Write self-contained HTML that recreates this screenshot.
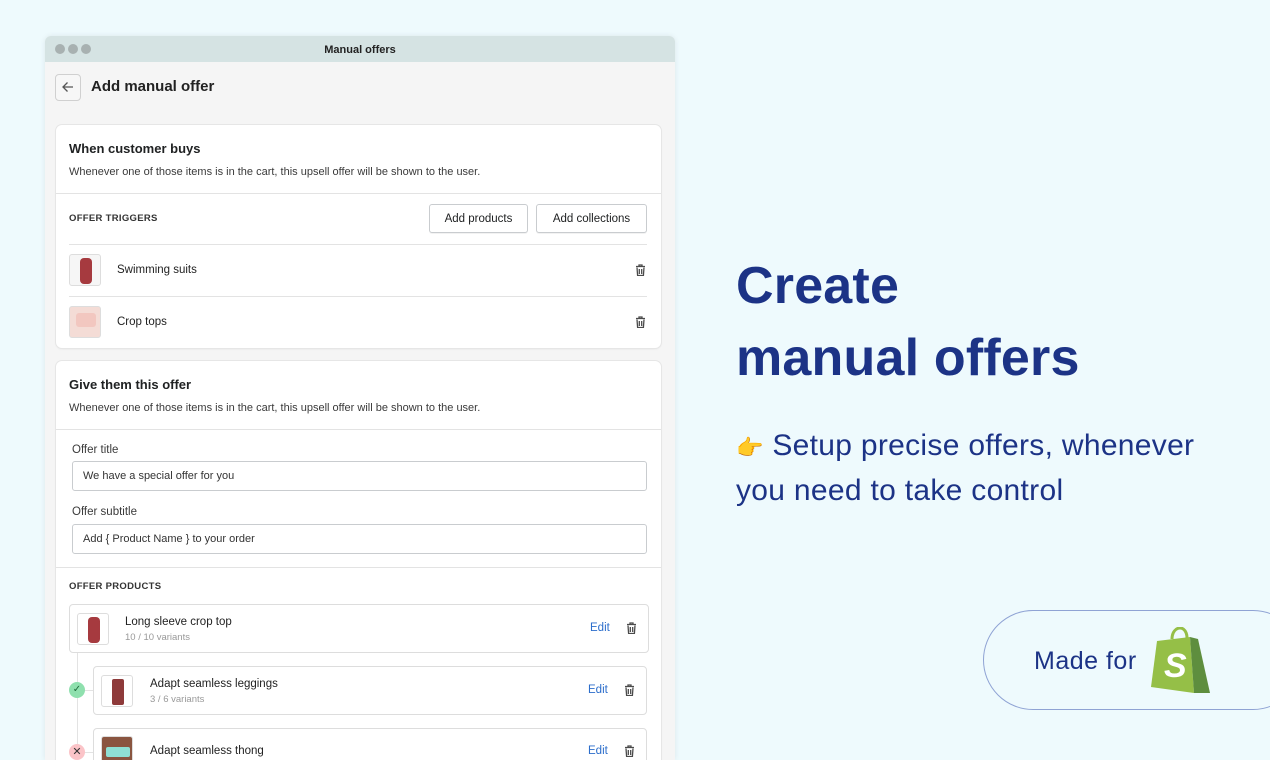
<!DOCTYPE html>
<html><head><meta charset="utf-8"><style>
*{margin:0;padding:0;box-sizing:border-box}
body{width:1270px;height:760px;overflow:hidden;background:#eefafd;font-family:"Liberation Sans",sans-serif;position:relative;color:#202223}
.a{position:absolute}
.win{left:45px;top:36px;width:630px;height:724px;background:#f5f5f5;border-radius:6px 6px 0 0;overflow:hidden;box-shadow:0 0 6px rgba(0,0,0,.08)}
.tb{left:0;top:0;width:630px;height:26px;background:#d5e3e3}
.dot{width:10px;height:10px;border-radius:50%;background:#a8b1b1;top:8px}
.card{background:#fff;border-radius:6px;box-shadow:0 0 0 1px #e6e6e6,0 1px 2px rgba(0,0,0,.08)}
.h{font-size:13px;font-weight:bold}
.p{font-size:11px;color:#3a3a3a}
.lbl{font-size:9.5px;font-weight:bold;letter-spacing:.3px;color:#333}
.btn{border:1px solid #c9cccf;border-radius:3px;background:#fff;font-size:11.5px;text-align:center;line-height:28px;box-shadow:0 1px 0 rgba(0,0,0,.05)}
.hr{height:1px;background:#e3e3e3}
.th{border:1px solid #ddd;border-radius:3px;background:#f6f6f6;overflow:hidden}
.inp{border:1px solid #c9cccf;border-radius:3px;height:30px;font-size:11px;line-height:28px;padding-left:10px;color:#333}
.edit{color:#2c6ecb;font-size:11.5px}
.trash{width:11px;height:12px}
</style></head><body>
<div class="a win">
 <div class="a tb"></div>
 <div class="a dot" style="left:10px"></div><div class="a dot" style="left:23px"></div><div class="a dot" style="left:36px"></div>
 <div class="a" style="left:0;width:630px;top:8px;text-align:center;font-size:11px;font-weight:bold;color:#222">Manual offers</div>
 <div class="a" style="left:10px;top:38px;width:26px;height:27px;border:1px solid #d0d0d0;border-radius:4px;background:#f7f7f7"></div>
 <svg class="a" style="left:16px;top:44px" width="14" height="14" viewBox="0 0 14 14"><path d="M12 7H2M6.5 2.5L2 7l4.5 4.5" stroke="#555" stroke-width="1.3" fill="none"/></svg>
 <div class="a" style="left:46px;top:42px;font-size:15px;font-weight:bold;color:#222">Add manual offer</div>

 <div class="a card" style="left:11px;top:89px;width:605px;height:223px">
  <div class="a h" style="left:13px;top:16px">When customer buys</div>
  <div class="a p" style="left:13px;top:41px">Whenever one of those items is in the cart, this upsell offer will be shown to the user.</div>
  <div class="a hr" style="left:0;top:68px;width:605px"></div>
  <div class="a lbl" style="left:13px;top:88px">OFFER TRIGGERS</div>
  <div class="a btn" style="left:373px;top:79px;width:99px;height:29px">Add products</div>
  <div class="a btn" style="left:480px;top:79px;width:111px;height:29px">Add collections</div>
  <div class="a hr" style="left:13px;top:119px;width:578px"></div>
  <div class="a th" style="left:13px;top:129px;width:32px;height:32px"><div style="margin:3px 10px;width:12px;height:26px;background:#a63a3f;border-radius:4px"></div></div>
  <div class="a p" style="left:61px;top:139px;font-size:11.5px;color:#222">Swimming suits</div>
  <div class="a hr" style="left:13px;top:171px;width:578px"></div>
  <div class="a th" style="left:13px;top:181px;width:32px;height:32px;background:#f4dcd6"><div style="margin:6px 6px;width:20px;height:14px;background:#f2c7c0;border-radius:3px"></div></div>
  <div class="a p" style="left:61px;top:191px;font-size:11.5px;color:#222">Crop tops</div>
 </div>

 <div class="a card" style="left:11px;top:325px;width:605px;height:420px">
  <div class="a h" style="left:13px;top:16px">Give them this offer</div>
  <div class="a p" style="left:13px;top:41px">Whenever one of those items is in the cart, this upsell offer will be shown to the user.</div>
  <div class="a hr" style="left:0;top:68px;width:605px"></div>
  <div class="a p" style="left:16px;top:83px;font-size:11.5px">Offer title</div>
  <div class="a inp" style="left:16px;top:100px;width:575px">We have a special offer for you</div>
  <div class="a p" style="left:16px;top:145px;font-size:11.5px">Offer subtitle</div>
  <div class="a inp" style="left:16px;top:163px;width:575px">Add { Product Name } to your order</div>
  <div class="a hr" style="left:0;top:206px;width:605px"></div>
  <div class="a lbl" style="left:13px;top:220px">OFFER PRODUCTS</div>
  <div class="a" style="left:13px;top:243px;width:580px;height:49px;border:1px solid #ddd;border-radius:4px"></div>
  <div class="a th" style="left:21px;top:252px;width:32px;height:32px;background:#fff"><div style="margin:3px 10px;width:12px;height:26px;background:#a63a3f;border-radius:4px"></div></div>
  <div class="a p" style="left:69px;top:255px;font-size:11.5px;color:#222">Long sleeve crop top</div>
  <div class="a p" style="left:69px;top:271px;font-size:9.5px;color:#999">10 / 10 variants</div>
  <div class="a edit" style="left:534px;top:261px">Edit</div>
  <div class="a" style="left:21px;top:292px;width:1px;height:130px;background:#e3e3e3"></div>
  <div class="a" style="left:21px;top:329px;width:16px;height:1px;background:#e3e3e3"></div>
  <div class="a" style="left:21px;top:391px;width:16px;height:1px;background:#e3e3e3"></div>
  <div class="a" style="left:37px;top:305px;width:554px;height:49px;border:1px solid #ddd;border-radius:4px"></div>
  <div class="a th" style="left:45px;top:314px;width:32px;height:32px;background:#fff"><div style="margin:3px 10px;width:12px;height:26px;background:#8e3a3a;border-radius:2px"></div></div>
  <div class="a p" style="left:94px;top:317px;font-size:11.5px;color:#222">Adapt seamless leggings</div>
  <div class="a p" style="left:94px;top:333px;font-size:9.5px;color:#999">3 / 6 variants</div>
  <div class="a edit" style="left:532px;top:323px">Edit</div>
  <div class="a" style="left:13px;top:321px;width:16px;height:16px;border-radius:50%;background:#8fe0ae;color:#1d6b3a;font-size:10px;text-align:center;line-height:16px">✓</div>
  <div class="a" style="left:37px;top:367px;width:554px;height:60px;border:1px solid #ddd;border-radius:4px"></div>
  <div class="a th" style="left:45px;top:375px;width:32px;height:32px;background:#8a5540"><div style="margin:10px 4px;width:24px;height:10px;background:#8fe0d4;border-radius:2px"></div></div>
  <div class="a p" style="left:94px;top:384px;font-size:11.5px;color:#222">Adapt seamless thong</div>
  <div class="a edit" style="left:532px;top:384px">Edit</div>
  <div class="a" style="left:13px;top:383px;width:16px;height:16px;border-radius:50%;background:#fbc4c8;color:#333;font-size:11px;text-align:center;line-height:16px">✕</div>
 </div>
</div>
<svg width="0" height="0" style="position:absolute"><defs><symbol id="tr" viewBox="0 0 11 12"><path d="M1 2.5h9M4 2.5V1h3v1.5M2 3.5l.6 8h5.8l.6-8M4.3 5v5M6.7 5v5" stroke="#4a4a4a" stroke-width="1.3" fill="none"/></symbol></defs></svg>
<svg class="a trash" style="left:635px;top:264px"><use href="#tr"/></svg>
<svg class="a trash" style="left:635px;top:316px"><use href="#tr"/></svg>
<svg class="a trash" style="left:626px;top:622px"><use href="#tr"/></svg>
<svg class="a trash" style="left:624px;top:684px"><use href="#tr"/></svg>
<svg class="a trash" style="left:624px;top:745px"><use href="#tr"/></svg>

<div class="a" style="left:736px;top:250px;font-size:52px;font-weight:bold;color:#1c3386;line-height:72px;letter-spacing:.2px">Create<br>manual offers</div>
<div class="a" style="left:736px;top:424px;font-size:30px;color:#1c3386;line-height:43px;width:540px;letter-spacing:.3px">
<span style="font-size:22px">👉</span> Setup precise offers, whenever<br>you need to take control</div>

<div class="a" style="left:983px;top:610px;width:320px;height:100px;border:1px solid #8fa3d4;border-radius:50px;"></div>
<div class="a" style="left:1034px;top:647px;font-size:25px;color:#1c3386;letter-spacing:.5px">Made for</div>
<svg class="a" style="left:1150px;top:627px" width="60" height="66" viewBox="0 0 60 66">
<path d="M22 12c0-7 4-11 8-11s7 4 7 10" stroke="#95bf47" stroke-width="3" fill="none"/>
<path d="M7 14l33-4 4 56-43-6z" fill="#95bf47"/>
<path d="M40 10l8 2 12 54-16 0z" fill="#5e8e3e"/>
<text x="14" y="50" font-family="Liberation Sans" font-weight="bold" font-style="italic" font-size="34" fill="#fff">S</text>
</svg>
</body></html>
